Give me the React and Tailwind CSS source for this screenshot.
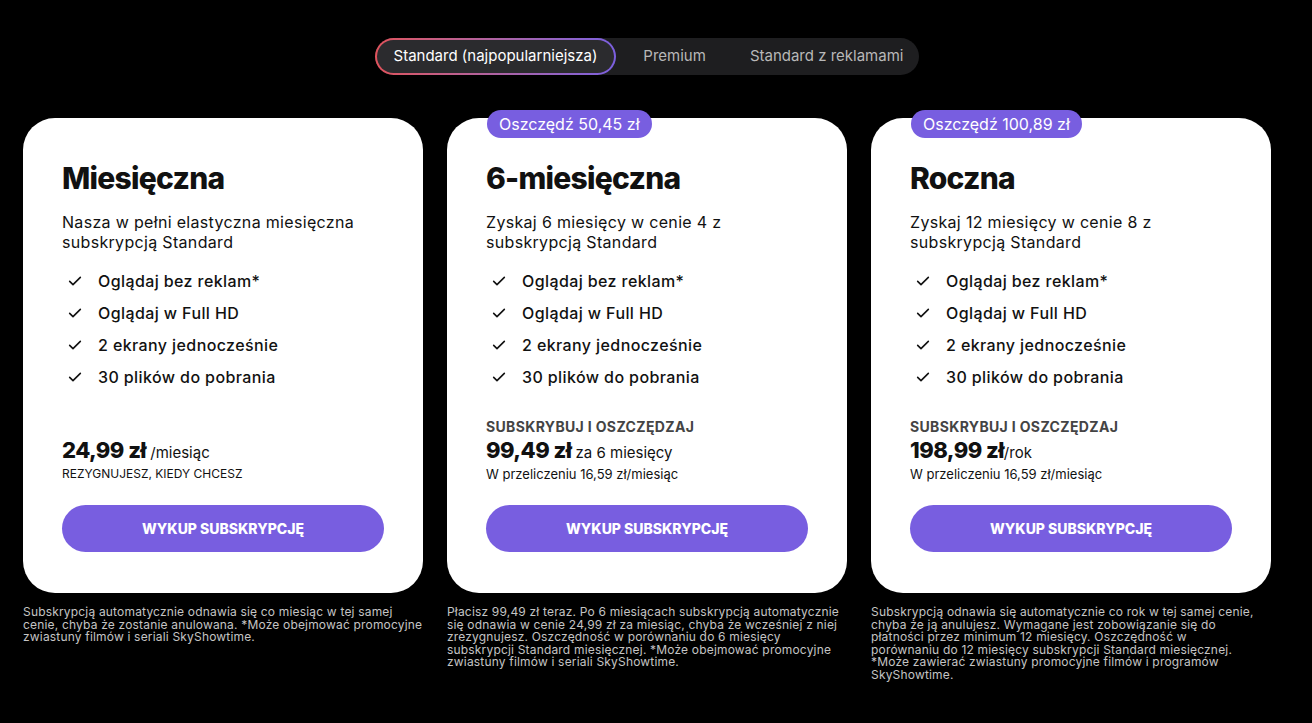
import React, { useState } from "react";

const plans = [
  {
    title: "Miesięczna",
    desc: "Nasza w pełni elastyczna miesięczna subskrypcją Standard",
    price: "24,99 zł",
    period: " /miesiąc",
    sub: "REZYGNUJESZ, KIEDY CHCESZ",
    note: "Subskrypcją automatycznie odnawia się co miesiąc w tej samej cenie, chyba że zostanie anulowana. *Może obejmować promocyjne zwiastuny filmów i seriali SkyShowtime.",
  },
  {
    title: "6-miesięczna",
    badge: "Oszczędź 50,45 zł",
    desc: "Zyskaj 6 miesięcy w cenie 4 z subskrypcją Standard",
    label: "SUBSKRYBUJ I OSZCZĘDZAJ",
    price: "99,49 zł",
    period: " za 6 miesięcy",
    sub: "W przeliczeniu 16,59 zł/miesiąc",
    note: "Płacisz 99,49 zł teraz. Po 6 miesiącach subskrypcją automatycznie się odnawia w cenie 24,99 zł za miesiąc, chyba że wcześniej z niej zrezygnujesz. Oszczędność w porównaniu do 6 miesięcy subskrypcji Standard miesięcznej. *Może obejmować promocyjne zwiastuny filmów i seriali SkyShowtime.",
  },
  {
    title: "Roczna",
    badge: "Oszczędź 100,89 zł",
    desc: "Zyskaj 12 miesięcy w cenie 8 z subskrypcją Standard",
    label: "SUBSKRYBUJ I OSZCZĘDZAJ",
    price: "198,99 zł",
    period: "/rok",
    sub: "W przeliczeniu 16,59 zł/miesiąc",
    note: "Subskrypcją odnawia się automatycznie co rok w tej samej cenie, chyba że ją anulujesz. Wymagane jest zobowiązanie się do płatności przez minimum 12 miesięcy. Oszczędność w porównaniu do 12 miesięcy subskrypcji Standard miesięcznej. *Może zawierać zwiastuny promocyjne filmów i programów SkyShowtime.",
    notePad: "pr-[13px]",
  },
];

const features = [
  "Oglądaj bez reklam*",
  "Oglądaj w Full HD",
  "2 ekrany jednocześnie",
  "30 plików do pobrania",
];

const tabs = ["Standard (najpopularniejsza)", "Premium", "Standard z reklamami"];

function Check() {
  return (
    <svg width="16" height="16" viewBox="0 0 24 24" fill="none" stroke="#111" strokeWidth="2.4" strokeLinecap="round" strokeLinejoin="round">
      <path d="M4 12.5l5 5L20 6.5" />
    </svg>
  );
}

function PlanCard({ plan }) {
  return (
    <div className="flex flex-col">
      <div className="relative bg-white rounded-[32px] h-[475px] px-[39px] pt-[42px] pb-[41px] flex flex-col text-[#111]">
        {plan.badge && (
          <div className="absolute -top-2 left-10 h-7 px-3 rounded-full bg-[#785ee0] text-white text-[16px] leading-7">
            {plan.badge}
          </div>
        )}
        <h2 className="text-[30px] font-extrabold tracking-tight leading-9">{plan.title}</h2>
        <p className="mt-[16px] text-[16px] leading-5 pr-2 tracking-[0.02em]">{plan.desc}</p>
        <ul className="mt-[13px] flex flex-col">
          {features.map((f) => (
            <li key={f} className="flex items-center h-8 text-[16px] font-medium tracking-[0.025em]">
              <span className="w-9 pl-[5px]"><Check /></span>
              {f}
            </li>
          ))}
        </ul>
        <div className="mt-auto">
          {plan.label && (
            <div className="text-[14px] font-bold tracking-wide text-[#444] leading-5">{plan.label}</div>
          )}
          <div className="leading-[26px]">
            <span className="text-[22px] font-extrabold tracking-tight">{plan.price}</span>
            <span className="text-[15px]">{plan.period}</span>
          </div>
          <div className={plan.label ? "text-[13px] leading-4" : "text-[12px] leading-4"}>{plan.sub}</div>
          <button className="mt-[23px] w-full h-[47px] rounded-full bg-[#785ee0] text-white text-[14px] font-extrabold">
            WYKUP SUBSKRYPCJĘ
          </button>
        </div>
      </div>
      <p className={`mt-[13px] text-[12px] leading-[12.5px] tracking-[0.015em] text-[#c4c4c4] ${plan.notePad || ""}`}>
        {plan.note}
      </p>
    </div>
  );
}

export default function App() {
  const [active, setActive] = useState(0);
  return (
    <div className="min-h-screen bg-black font-['Inter','Noto_Sans',sans-serif] pl-[23px] pr-[41px] pt-[38px]">
      <div className="flex justify-center">
        <div className="flex items-center h-[37px] rounded-full bg-[#1e1e20] pr-[16px] text-[15px]">
          {tabs.map((t, i) =>
            i === active ? (
              <div key={t} className="rounded-full p-[2px] bg-gradient-to-r from-[#e0525b] to-[#7b5fe0]">
                <button onClick={() => setActive(i)} className="h-[33px] px-[17px] rounded-full bg-[#2b2b2e] text-white">
                  {t}
                </button>
              </div>
            ) : (
              <button
                key={t}
                onClick={() => setActive(i)}
                className={i === 1 ? "h-[33px] ml-[27px] text-[#b8b8b8]" : "h-[33px] ml-[44px] text-[#b8b8b8]"}
              >
                {t}
              </button>
            )
          )}
        </div>
      </div>
      <div className="grid grid-cols-3 gap-6 mt-[43px]">
        {plans.map((p) => (
          <PlanCard key={p.title} plan={p} />
        ))}
      </div>
    </div>
  );
}
